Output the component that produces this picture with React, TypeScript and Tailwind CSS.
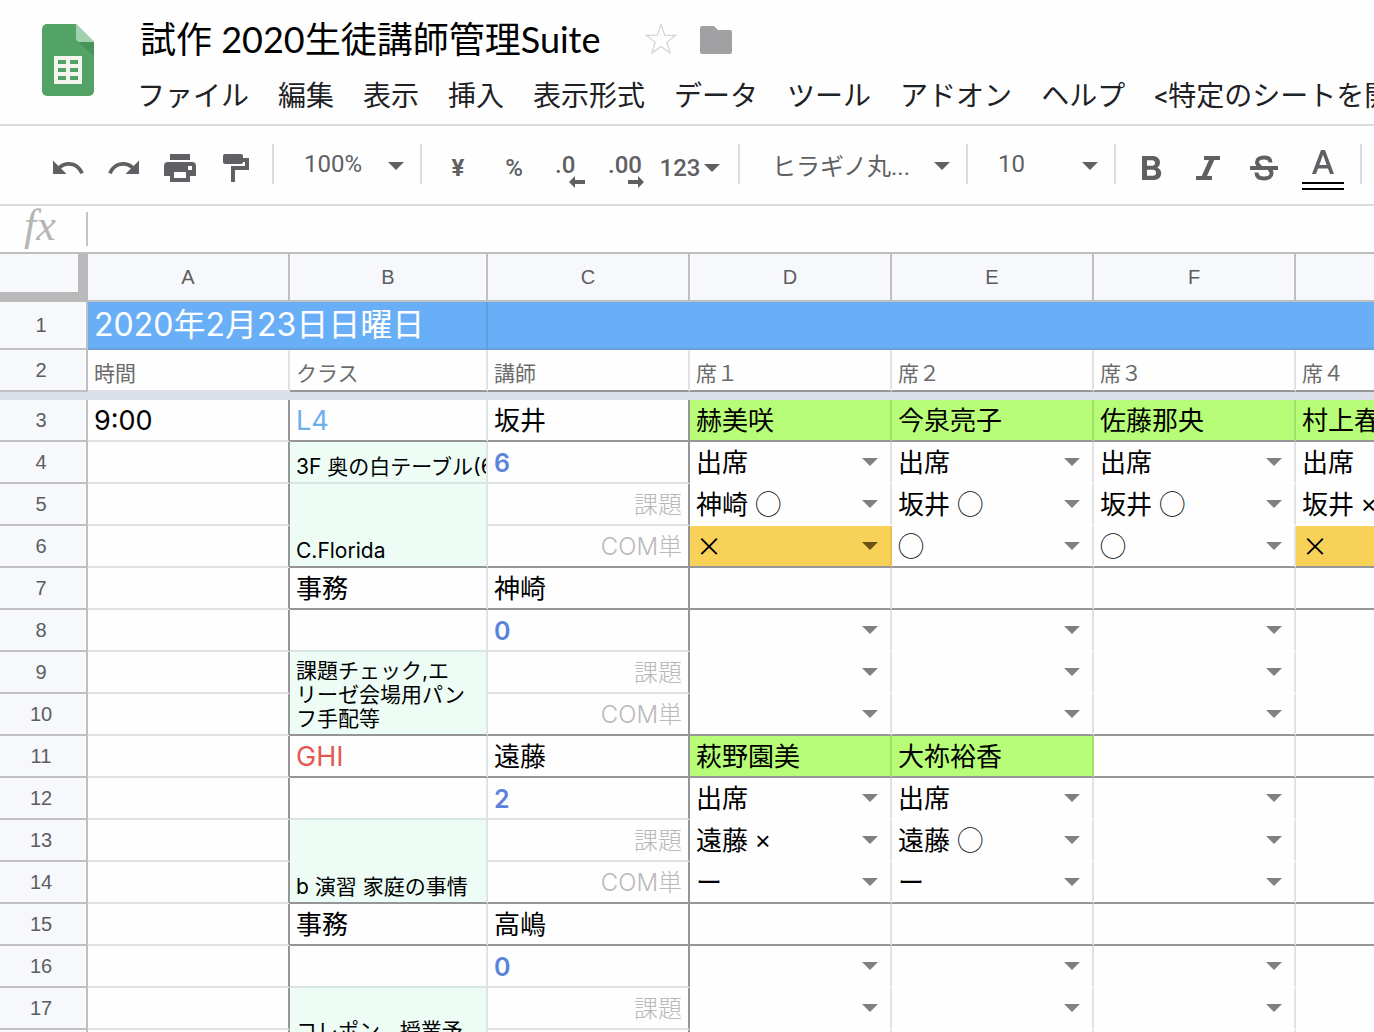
import type { ReactNode } from 'react';

const MENUS = [
  'ファイル',
  '編集',
  '表示',
  '挿入',
  '表示形式',
  'データ',
  'ツール',
  'アドオン',
  'ヘルプ',
  '<特定のシートを開く>',
];

type Seat = { text?: string; select?: boolean; tone?: 'green' | 'orange' };
type Row = {
  n: number;
  heavy?: boolean;
  time?: string;
  room?: { text?: string; kind?: 'title' | 'blue' | 'red' | 'note'; span?: number };
  staff?: { text: string; kind: 'name' | 'count' | 'label' };
  seats: Seat[];
};

const pick = (...texts: string[]): Seat[] =>
  texts.map((text) => (text === '×' ? { text, select: true, tone: 'orange' } : { text, select: true }));
const green = (text: string): Seat => ({ text, tone: 'green' });
const blank: Seat = {};

const ROWS: Row[] = [
  {
    n: 3,
    heavy: true,
    time: '9:00',
    room: { text: 'L4', kind: 'blue' },
    staff: { text: '坂井', kind: 'name' },
    seats: [green('赫美咲'), green('今泉亮子'), green('佐藤那央'), green('村上春香')],
  },
  {
    n: 4,
    room: { text: '3F 奥の白テーブル(6)', kind: 'note' },
    staff: { text: '6', kind: 'count' },
    seats: pick('出席', '出席', '出席', '出席'),
  },
  {
    n: 5,
    room: { text: 'C.Florida', kind: 'note', span: 2 },
    staff: { text: '課題', kind: 'label' },
    seats: pick('神崎 ◯', '坂井 ◯', '坂井 ◯', '坂井 ×'),
  },
  { n: 6, heavy: true, staff: { text: 'COM単', kind: 'label' }, seats: pick('×', '◯', '◯', '×') },
  {
    n: 7,
    heavy: true,
    room: { text: '事務', kind: 'title' },
    staff: { text: '神崎', kind: 'name' },
    seats: [blank, blank, blank, blank],
  },
  { n: 8, room: {}, staff: { text: '0', kind: 'count' }, seats: pick('', '', '', '') },
  {
    n: 9,
    room: { text: '課題チェック,エ\nリーゼ会場用パン\nフ手配等', kind: 'note', span: 2 },
    staff: { text: '課題', kind: 'label' },
    seats: pick('', '', '', ''),
  },
  { n: 10, heavy: true, staff: { text: 'COM単', kind: 'label' }, seats: pick('', '', '', '') },
  {
    n: 11,
    heavy: true,
    room: { text: 'GHI', kind: 'red' },
    staff: { text: '遠藤', kind: 'name' },
    seats: [green('萩野園美'), green('大祢裕香'), blank, blank],
  },
  { n: 12, room: {}, staff: { text: '2', kind: 'count' }, seats: pick('出席', '出席', '', '') },
  {
    n: 13,
    room: { text: 'b 演習 家庭の事情', kind: 'note', span: 2 },
    staff: { text: '課題', kind: 'label' },
    seats: pick('遠藤 ×', '遠藤 ◯', '', ''),
  },
  { n: 14, heavy: true, staff: { text: 'COM単', kind: 'label' }, seats: pick('ー', 'ー', '', '') },
  {
    n: 15,
    heavy: true,
    room: { text: '事務', kind: 'title' },
    staff: { text: '高嶋', kind: 'name' },
    seats: [blank, blank, blank, blank],
  },
  { n: 16, room: {}, staff: { text: '0', kind: 'count' }, seats: pick('', '', '', '') },
  {
    n: 17,
    room: { text: 'コレポン、授業予\n習', kind: 'note', span: 2 },
    staff: { text: '課題', kind: 'label' },
    seats: pick('', '', '', ''),
  },
  { n: 18, heavy: true, staff: { text: 'COM単', kind: 'label' }, seats: pick('', '', '', '') },
];

const ROOM_TEXT = {
  title: 'text-[26px] leading-8 text-black',
  blue: 'text-[27px] leading-8 text-[#6cb0ea]',
  red: 'text-[27px] leading-8 text-[#e05a52]',
  note: 'bg-[#edfdf6] text-[21px] leading-6 text-black whitespace-pre',
};

const STAFF_TEXT = {
  name: 'text-[26px] leading-8 text-black',
  count: 'text-[25px] leading-8 font-semibold text-[#5b83dc]',
  label: 'text-2xl leading-8 text-right font-light text-[#b9b9b9]',
};

function Caret({ className = '' }: { className?: string }) {
  return (
    <svg viewBox="0 0 16 8" className={`h-2 w-4 shrink-0 ${className}`} fill="currentColor" aria-hidden="true">
      <path d="M0 0h16L8 8z" />
    </svg>
  );
}

function Separator({ className = '' }: { className?: string }) {
  return <div className={`h-10 w-0.5 shrink-0 bg-[#dadce0] ${className}`} />;
}

function Tool({ label, children, wide }: { label: string; children: ReactNode; wide?: string }) {
  return (
    <button aria-label={label} className={`flex h-full shrink-0 items-center justify-center pt-2 ${wide ?? 'w-14'}`}>
      {children}
    </button>
  );
}

function Combo({ label, value, className, pad }: { label: string; value: string; className: string; pad: string }) {
  return (
    <div className={`grid shrink-0 items-center ${className}`}>
      <select aria-label={label} className={`col-start-1 row-start-1 h-10 w-full appearance-none bg-transparent outline-none ${pad}`}>
        <option>{value}</option>
      </select>
      <Caret className="pointer-events-none col-start-1 row-start-1 mt-1 mr-4 justify-self-end" />
    </div>
  );
}

function Toolbar() {
  return (
    <div className="flex h-20 items-center overflow-hidden border-b-2 border-[#dadce0] pb-0.5 pl-10 font-[Roboto,'Noto_Sans_CJK_JP',sans-serif] text-2xl text-[#5f6063]">
      <Tool label="元に戻す">
        <svg viewBox="0 0 24 24" className="size-9" fill="currentColor">
          <path d="M12.5 8c-2.65 0-5.05.99-6.9 2.6L2 7v9h9l-3.62-3.62c1.39-1.16 3.16-1.88 5.12-1.88 3.54 0 6.55 2.31 7.6 5.5l2.37-.78C21.08 11.03 17.15 8 12.5 8z" />
        </svg>
      </Tool>
      <Tool label="やり直し">
        <svg viewBox="0 0 24 24" className="size-9" fill="currentColor">
          <path d="M18.4 10.6C16.55 8.99 14.15 8 11.5 8c-4.65 0-8.58 3.03-9.96 7.22L3.9 16c1.05-3.19 4.05-5.5 7.6-5.5 1.95 0 3.73.72 5.12 1.88L13 16h9V7l-3.6 3.6z" />
        </svg>
      </Tool>
      <Tool label="印刷">
        <svg viewBox="0 0 32 28" className="h-7 w-8" fill="currentColor">
          <path
            fillRule="evenodd"
            d="M6 0h20v6H6zM4 8h24a4 4 0 0 1 4 4v10h-6v6H6v-6H0V12a4 4 0 0 1 4-4zm6 10v6h12v-6zM24 12v4h4v-4z"
          />
        </svg>
      </Tool>
      <Tool label="書式を貼り付け">
        <svg viewBox="0 0 26 28" className="h-7 w-[26px]" fill="currentColor">
          <path d="M2 0h16a2 2 0 0 1 2 2v2h6v12H12v12H8V12h14V8h-2a2 2 0 0 1-2 2H2a2 2 0 0 1-2-2V2a2 2 0 0 1 2-2z" />
        </svg>
      </Tool>
      <Separator className="ml-2" />
      <Combo label="ズーム" value="100%" className="w-[146px]" pad="pl-[30px]" />
      <Separator className="mr-2" />
      <Tool label="通貨の表示形式">
        <span className="font-bold">¥</span>
      </Tool>
      <Tool label="パーセントの表示形式">
        <span className="font-medium">%</span>
      </Tool>
      <Tool label="小数点以下の桁数を減らす">
        <span className="flex flex-col gap-px pt-1.5 text-left">
          <span className="leading-5 font-medium">.0</span>
          <svg viewBox="0 0 30 12" className="h-3 w-[30px]" fill="currentColor">
            <path d="M14 6l6-6v4h10v4H20v4z" />
          </svg>
        </span>
      </Tool>
      <Tool label="小数点以下の桁数を増やす">
        <span className="flex flex-col gap-px pt-1.5 text-left">
          <span className="leading-5 font-medium">.00</span>
          <svg viewBox="0 0 36 12" className="h-3 w-9" fill="currentColor">
            <path d="M36 6l-6-6v4H20v4h10v4z" />
          </svg>
        </span>
      </Tool>
      <Tool label="表示形式の詳細設定" wide="w-[84px] gap-1 pr-3">
        <span className="font-medium">123</span>
        <Caret />
      </Tool>
      <Separator />
      <Combo label="フォント" value="ヒラギノ丸..." className="w-[226px]" pad="pl-8 pt-1.5" />
      <Separator />
      <Combo label="フォントサイズ" value="10" className="w-[146px]" pad="pl-[30px]" />
      <Separator className="mr-2" />
      <Tool label="太字">
        <svg viewBox="0 0 20 24" className="h-6 w-5" fill="currentColor">
          <path
            fillRule="evenodd"
            d="M0 0h10.500c4.300 0 7.500 2.500 7.500 6.400 0 2.300-1 4-2.800 5.100 2.500.9 4 3 4 5.700 0 4.200-3.100 6.800-7.800 6.800H0zm5 4.200v5.500h5c1.900 0 3-1 3-2.700s-1.100-2.800-3-2.800zm0 9.500v6h5.800c2 0 3.300-1.100 3.300-3s-1.300-3-3.300-3z"
          />
        </svg>
      </Tool>
      <Tool label="斜体">
        <svg viewBox="0 0 24 24" className="size-6" fill="currentColor">
          <path d="M8 0h16v4h-5.700l-7.300 16H16v4H0v-4h5.700L13 4H8z" />
        </svg>
      </Tool>
      <Tool label="取り消し線">
        <svg viewBox="0 0 28 28" className="size-7" fill="none" stroke="currentColor">
          <path strokeWidth="4" d="M20.500 8.500C20.500 5 18 3.500 14 3.500S7 5.300 7 8.300c0 2 1 3.500 4 4.700" />
          <path strokeWidth="4" d="M6.500 18.500c0 4 3 6 7.500 6s7.500-2 7.500-5.300c0-2-1-3.200-2.500-4.200" />
          <path strokeWidth="4" d="M0 14h28" />
        </svg>
      </Tool>
      <button aria-label="テキストの色" className="flex h-full w-[62px] shrink-0 flex-col items-center justify-center gap-2 pt-3">
        <svg viewBox="0 0 24 24" className="size-6" fill="currentColor">
          <path fillRule="evenodd" d="M10 0h4l9 24h-4l-2-5.500H7L5 24H1zM12 4.700L8.300 15h7.400z" />
        </svg>
        <span className="h-2 w-[42px] border-y-2 border-black" />
      </button>
      <Separator className="ml-1.5" />
    </div>
  );
}

function Header() {
  return (
    <header className="flex items-start gap-[43px] overflow-hidden border-b-2 border-[#dadce0] pt-4 pb-1.5 pl-[42px]">
      <svg viewBox="0 0 52 72" className="mt-2 h-[72px] w-[52px] shrink-0" role="img" aria-label="スプレッドシート">
        <path fill="#54a366" d="M5 0h29l18 18v49a5 5 0 0 1-5 5H5a5 5 0 0 1-5-5V5a5 5 0 0 1 5-5z" />
        <path fill="#4a935b" d="M36 18h16v14z" />
        <path fill="#a3d0ae" d="M34 0l18 18H38a4 4 0 0 1-4-4z" />
        <path
          fill="#f3f5f0"
          fillRule="evenodd"
          d="M12 32h28v28H12zM16 36v4h8v-4zM28 36v4h8v-4zM16 44v4h8v-4zM28 44v4h8v-4zM16 52v4h8v-4zM28 52v4h8v-4z"
        />
      </svg>
      <div className="flex flex-col gap-3">
        <div className="flex h-12 items-center pl-[3px]">
          <h1 className="pb-0.5 font-[Lato,'Noto_Sans_CJK_JP',sans-serif] text-4xl leading-[46px] whitespace-nowrap text-black">
            試作 2020生徒講師管理Suite
          </h1>
          <button aria-label="スターを付ける" className="ml-[45px] pb-0.5">
            <svg viewBox="0 0 32 32" className="size-8" fill="none" stroke="#d3d3d5" strokeWidth="1.200">
              <path d="M16 1.500l3.700 10.600 11 .2-8.800 6.800 3.200 11L16 23.600 6.900 30.100l3.200-11L1.300 12.300l11-.2z" />
            </svg>
          </button>
          <button aria-label="移動" className="ml-[23px]">
            <svg viewBox="0 0 32 28" className="h-7 w-8" fill="#a1a1a3">
              <path d="M2 0h12l4 4h12a2 2 0 0 1 2 2v20a2 2 0 0 1-2 2H2a2 2 0 0 1-2-2V2a2 2 0 0 1 2-2z" />
            </svg>
          </button>
        </div>
        <nav className="flex gap-[29px] font-[Roboto,'Noto_Sans_CJK_JP',sans-serif] text-[28px] leading-[42px] text-[#202124]">
          {MENUS.map((menu) => (
            <button key={menu} className="shrink-0 whitespace-nowrap">
              {menu}
            </button>
          ))}
        </nav>
      </div>
    </header>
  );
}

function FormulaBar() {
  return (
    <div className="flex h-12 items-center border-b-2 border-[#bdbdbd]">
      <label
        htmlFor="formula"
        className="w-[86px] shrink-0 pr-1.5 pb-1.5 text-center font-['Liberation_Serif',serif] text-[44px] leading-9 text-[#b5b5b5] italic"
      >
        fx
      </label>
      <input id="formula" className="h-[34px] min-w-0 flex-1 border-l-2 border-[#c4c4c4] px-2 text-2xl outline-none" />
    </div>
  );
}

function RowHead({ n }: { n: number }) {
  return (
    <th
      scope="row"
      className="border-r-2 border-b-2 border-[#c0c0c0] bg-[#f7f8fb] pr-1 text-center font-['Liberation_Sans',sans-serif] text-xl font-normal text-[#5c5d60]"
    >
      {n}
    </th>
  );
}

function SeatCell({ seat, heavy, label }: { seat: Seat; heavy?: boolean; label: string }) {
  const tone =
    seat.tone === 'green'
      ? 'bg-[#b8fd78] border-r-[#a3e06b]'
      : seat.tone === 'orange'
        ? 'bg-[#f8d158] border-r-[#e9c14c]'
        : 'border-r-[#e2e2e4]';
  const bottom = heavy ? 'border-b-[#969698]' : 'border-b-white';
  const face =
    seat.tone === 'orange'
      ? "pb-1 font-['Noto_Sans_CJK_JP',sans-serif]"
      : "font-['Liberation_Sans','Noto_Sans_CJK_JP',sans-serif]";
  return (
    <td
      className={`overflow-hidden border-r-2 border-b-2 pt-0.5 pl-1.5 font-['Liberation_Sans','Noto_Sans_CJK_JP',sans-serif] text-[26px] leading-8 whitespace-nowrap text-black ${tone} ${bottom}`}
    >
      {seat.select ? (
        <div className="grid items-center">
          <select
            aria-label={label}
            className={`col-start-1 row-start-1 h-[38px] w-full appearance-none bg-transparent outline-none ${face}`}
          >
            <option>{seat.text}</option>
          </select>
          <Caret
            className={`pointer-events-none col-start-1 row-start-1 mr-3 mb-0.5 justify-self-end ${
              seat.tone === 'orange' ? 'text-[#6a5210]' : 'text-[#808080]'
            }`}
          />
        </div>
      ) : (
        seat.text
      )}
    </td>
  );
}

function Sheet() {
  return (
    <div className="min-h-0 flex-1 overflow-hidden">
      <table className="w-full min-w-[1500px] table-fixed border-separate border-spacing-0 font-[Inter,'Noto_Sans_CJK_JP',sans-serif]">
        <colgroup>
          <col className="w-[88px]" />
          <col className="w-[202px]" />
          <col className="w-[198px]" />
          <col className="w-[202px]" />
          <col className="w-[202px]" />
          <col className="w-[202px]" />
          <col className="w-[202px]" />
          <col />
        </colgroup>
        <thead>
          <tr className="h-12 font-['Liberation_Sans',sans-serif] text-xl text-[#5c5d60]">
            <td className="border-r-[10px] border-b-[10px] border-[#b9b9b9] bg-[#f7f8fb]" />
            {['A', 'B', 'C', 'D', 'E', 'F', 'G'].map((c) => (
              <th key={c} scope="col" className="border-r-2 border-b-2 border-[#c0c0c0] bg-[#f7f8fb] font-normal">
                {c}
              </th>
            ))}
          </tr>
        </thead>
        <tbody>
          <tr className="h-12">
            <RowHead n={1} />
            <td
              colSpan={2}
              className="border-r-2 border-b-2 border-r-[#619fe4] border-b-[#6b9fda] bg-[#69aff8] pl-1.5 text-[32px] leading-10 text-white"
            >
              2020年2月23日日曜日
            </td>
            <td colSpan={5} className="border-b-2 border-[#6b9fda] bg-[#69aff8]" />
          </tr>
          <tr className="h-[42px] text-[21px] leading-6 text-[#6b6b6b]">
            <RowHead n={2} />
            <td className="border-r-2 border-b-2 border-r-[#e2e2e4] border-b-[#dadfe8] pb-1 pl-1.5 align-bottom">時間</td>
            {['クラス', '講師', '席１', '席２', '席３', '席４'].map((t) => (
              <td key={t} className="border-r-2 border-b-2 border-r-[#e2e2e4] border-b-[#969698] pb-1 pl-1.5 align-bottom">
                {t}
              </td>
            ))}
          </tr>
          <tr className="h-2">
            <td colSpan={8} className="bg-[#dadfe8]" />
          </tr>
          {ROWS.map((row) => {
            const bottom = row.heavy ? 'border-b-[#969698]' : 'border-b-[#e2e2e4]';
            const roomBottom = row.heavy || row.room?.span === 2 ? 'border-b-[#969698]' : 'border-b-[#d9e5e0]';
            return (
              <tr key={row.n} className="h-[42px]">
                <RowHead n={row.n} />
                <td className="border-r-2 border-b-2 border-r-[#969698] border-b-[#e2e2e4] pt-0.5 pl-1.5 text-[27px] leading-8">
                  {row.time}
                </td>
                {row.room && (
                  <td
                    rowSpan={row.room.span}
                    className={`overflow-hidden border-r-2 border-b-2 border-r-[#dfe3e3] pb-[3px] pl-1.5 align-bottom ${roomBottom} ${
                      row.room.kind ? ROOM_TEXT[row.room.kind] : ''
                    }`}
                  >
                    {row.room.text}
                  </td>
                )}
                {row.staff && (
                  <td className={`border-r-2 border-b-2 border-r-[#969698] px-1.5 pt-0.5 ${bottom} ${STAFF_TEXT[row.staff.kind]}`}>
                    {row.staff.text}
                  </td>
                )}
                {row.seats.map((seat, i) => (
                  <SeatCell key={i} seat={seat} heavy={row.heavy} label={`席${i + 1} ${row.n}行`} />
                ))}
              </tr>
            );
          })}
        </tbody>
      </table>
    </div>
  );
}

export default function App() {
  return (
    <main className="flex h-screen flex-col overflow-hidden bg-[#fefefe]">
      <Header />
      <Toolbar />
      <FormulaBar />
      <Sheet />
    </main>
  );
}
